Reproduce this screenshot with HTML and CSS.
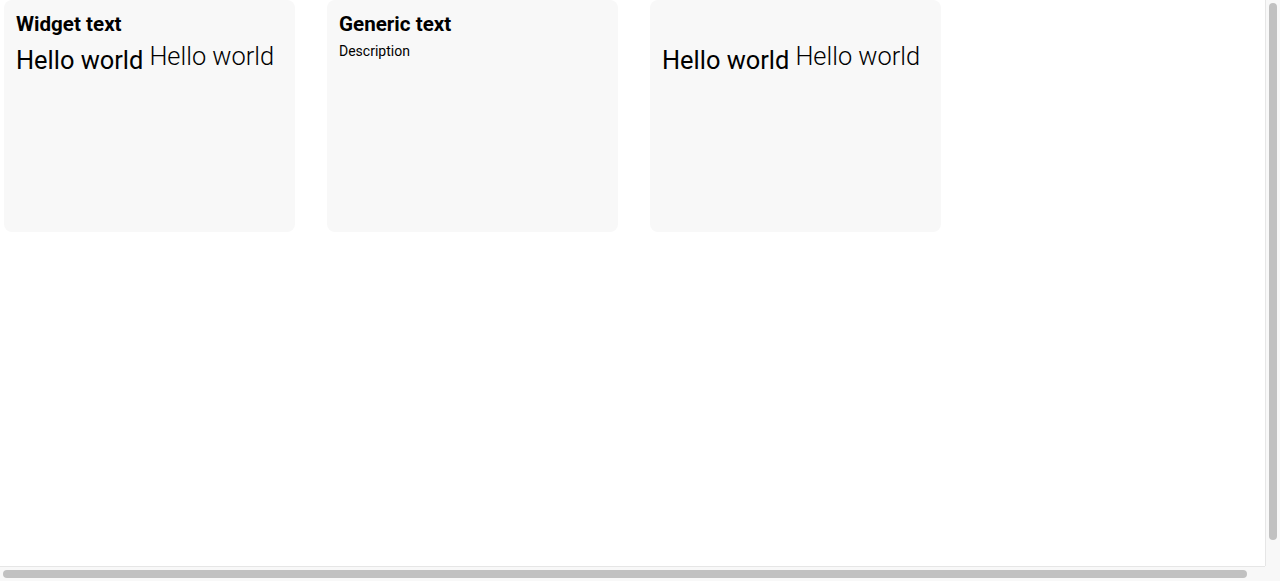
FILE: index.html
```html
<!DOCTYPE html>
<html>
<head>
<meta charset="utf-8">
<link rel="stylesheet" href="styles.css">
</head>
<body>
<div class="page">
  <div class="cards">
    <div class="card">
      <div class="title">Widget text</div>
      <div class="hello-row">
        <span class="hello">Hello world</span>
        <span class="hello light">Hello world</span>
      </div>
    </div>
    <div class="card">
      <div class="title">Generic text</div>
      <div class="desc">Description</div>
    </div>
    <div class="card">
      <div class="title"></div>
      <div class="hello-row">
        <span class="hello">Hello world</span>
        <span class="hello light">Hello world</span>
      </div>
    </div>
  </div>
</div>
<div class="sb sb-v"><div class="thumb thumb-v"></div></div>
<div class="sb sb-h"><div class="thumb thumb-h"></div></div>
<div class="sb sb-corner"></div>
</body>
</html>
```
FILE: styles.css
```css
html, body {
  margin: 0;
  padding: 0;
  background: #ffffff;
  overflow: hidden;
}
body {
  font-family: Roboto, "Liberation Sans", sans-serif;
  color: #000;
}
.page {
  width: 1265px;
  height: 566px;
}
.cards {
  display: flex;
  gap: 32px;
  padding-left: 4px;
}
.card {
  width: 291px;
  height: 232px;
  box-sizing: border-box;
  background: #f8f8f8;
  border-radius: 8px;
  padding: 8px 12px;
}
.title {
  font-size: 20.6px;
  font-weight: 700;
  line-height: 32px;
  height: 32px;
}
.hello-row {
  display: flex;
  align-items: flex-start;
  gap: 6px;
}
.hello {
  font-size: 25.4px;
  line-height: 40px;
  font-weight: 400;
}
.hello.light {
  font-weight: 300;
  line-height: 32px;
}
.desc {
  font-size: 14px;
  line-height: 22px;
}

/* fake browser scrollbars */
.sb {
  position: fixed;
  background: #f8f8f8;
  box-sizing: border-box;
}
.sb-v {
  top: 0;
  right: 0;
  width: 15px;
  height: 566px;
  border-left: 1px solid #e6e6e6;
  padding: 3px 2px 0 3px;
}
.sb-h {
  left: 0;
  bottom: 0;
  width: 1265px;
  height: 15px;
  border-top: 1px solid #e6e6e6;
  padding: 3px 0 0 3px;
}
.sb-corner {
  right: 0;
  bottom: 0;
  width: 15px;
  height: 15px;
}
.thumb {
  background: #c1c1c1;
  border-radius: 4px;
}
.thumb-v {
  width: 8px;
  height: 537px;
}
.thumb-h {
  width: 1244px;
  height: 8px;
}
```
